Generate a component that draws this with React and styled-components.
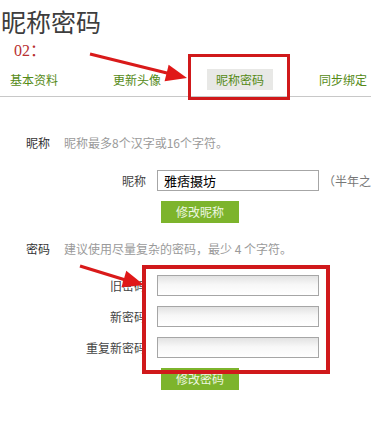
import React from "react";
import styled, { createGlobalStyle } from "styled-components";

const GlobalStyle = createGlobalStyle`
  html, body {
    margin: 0;
    padding: 0;
    background: #fff;
    overflow: hidden;
  }
  body {
    font-family: "Noto Sans CJK SC", "Liberation Sans", sans-serif;
    font-size: 12px;
    color: #333;
  }
`;

const tabs = ["基本资料", "更新头像", "昵称密码", "同步绑定"];

// annotation arrows drawn on top of the page
const arrows = [
  { from: [90, 54], to: [187, 78] },
  { from: [80, 266], to: [144, 285] },
];

function arrowHead([x1, y1], [x2, y2]) {
  const dx = x2 - x1;
  const dy = y2 - y1;
  const len = Math.hypot(dx, dy);
  const ux = dx / len;
  const uy = dy / len;
  const bx = x2 - ux * 21;
  const by = y2 - uy * 21;
  const w = 8.5;
  return `${x2},${y2} ${bx - uy * w},${by + ux * w} ${bx + uy * w},${by - ux * w}`;
}

export default function App() {
  return (
    <Page>
      <GlobalStyle />
      <Title>昵称密码</Title>
      <StepNo>02：</StepNo>
      <Tabs>
        {tabs.map((t) => (
          <Tab key={t} $active={t === "昵称密码"}>
            {t}
          </Tab>
        ))}
      </Tabs>

      <Section $top={36}>
        <SectionHead>
          <HeadLabel>昵称</HeadLabel>
          <Hint>昵称最多8个汉字或16个字符。</Hint>
        </SectionHead>
        <Form $top={17}>
          <FieldLabel>昵称</FieldLabel>
          <FieldWrap>
            <Input defaultValue="雅痞摄坊" $filled />
            <Note>（半年之内</Note>
          </FieldWrap>
          <span />
          <Button>修改昵称</Button>
        </Form>
      </Section>

      <Section $top={16}>
        <SectionHead>
          <HeadLabel>密码</HeadLabel>
          <Hint>建议使用尽量复杂的密码，最少 4 个字符。</Hint>
        </SectionHead>
        <Form $top={16}>
          <FieldLabel>旧密码</FieldLabel>
          <Input type="password" />
          <FieldLabel>新密码</FieldLabel>
          <Input type="password" />
          <FieldLabel>重复新密码</FieldLabel>
          <Input type="password" />
          <span />
          <Button>修改密码</Button>
        </Form>
      </Section>

      <Mark $x={188} $y={54} $w={102} $h={46} $b={3} />
      <Mark $x={142} $y={265} $w={188} $h={109} $b={4} />
      <Overlay width="371" height="426">
        {arrows.map((a, i) => (
          <g key={i}>
            <line
              x1={a.from[0]}
              y1={a.from[1]}
              x2={a.to[0] - 12}
              y2={a.to[1] - 3}
              stroke="#d91a1a"
              strokeWidth="3.2"
            />
            <polygon points={arrowHead(a.from, a.to)} fill="#e01818" />
          </g>
        ))}
      </Overlay>
    </Page>
  );
}

const Page = styled.div`
  position: relative;
  width: 371px;
  height: 426px;
  overflow: hidden;
`;

const Title = styled.h1`
  margin: 0;
  padding: 5px 0 0 1px;
  height: 34px;
  font-family: "Noto Sans CJK SC", sans-serif;
  font-size: 25px;
  font-weight: 400;
  line-height: 32px;
  color: #3d3d3d;
`;

const StepNo = styled.div`
  padding: 3px 0 0 14px;
  height: 27px;
  font-family: "Liberation Serif", "Noto Sans CJK SC", serif;
  font-size: 16px;
  line-height: 18px;
  color: #b8302f;
`;

const Tabs = styled.div`
  display: flex;
  gap: 37px;
  padding: 0 0 6px 1px;
  border-bottom: 1px solid #c8c8c8;
`;

const Tab = styled.div`
  height: 21px;
  padding: 0 9px;
  line-height: 21px;
  font-size: 12px;
  white-space: nowrap;
  color: #558a16;
  background: ${(p) => (p.$active ? "#e8e8e6" : "transparent")};
`;

const Section = styled.section`
  padding-top: ${(p) => p.$top}px;
`;

const SectionHead = styled.div`
  display: flex;
  padding-left: 26px;
  height: 20px;
  line-height: 20px;
`;

const HeadLabel = styled.span`
  width: 38px;
  color: #333;
  font-size: 12px;
`;

const Hint = styled.span`
  color: #9a9a9a;
  font-size: 12px;
`;

const Form = styled.div`
  display: grid;
  grid-template-columns: 146px auto;
  column-gap: 11px;
  row-gap: 10px;
  align-items: center;
  margin-top: ${(p) => p.$top}px;
`;

const FieldLabel = styled.label`
  text-align: right;
  font-size: 12px;
  color: #444;
  white-space: nowrap;
`;

const FieldWrap = styled.div`
  display: flex;
  align-items: center;
  gap: 4px;
`;

const Input = styled.input`
  box-sizing: border-box;
  width: 162px;
  height: 21px;
  margin: 0;
  padding: 0 6px;
  border: 1px solid #a6a6a6;
  border-radius: 0;
  outline: none;
  font-family: "Noto Sans CJK SC", sans-serif;
  font-size: 13px;
  font-weight: 400;
  color: #000;
  background: ${(p) =>
    p.$filled ? "#fff" : "linear-gradient(#e2e2e2 0%, #f7f7f7 45%, #fff 100%)"};
`;

const Note = styled.span`
  color: #777;
  font-size: 12px;
  white-space: nowrap;
`;

const Button = styled.button`
  justify-self: start;
  width: 78px;
  height: 22px;
  margin: 0 0 0 4px;
  padding: 0;
  border: none;
  background: #7db42c;
  color: #eef7e2;
  font-family: "Noto Sans CJK SC", sans-serif;
  font-size: 12px;
  line-height: 22px;
`;

const Mark = styled.div`
  position: absolute;
  left: ${(p) => p.$x}px;
  top: ${(p) => p.$y}px;
  width: ${(p) => p.$w}px;
  height: ${(p) => p.$h}px;
  box-sizing: border-box;
  border: ${(p) => p.$b}px solid #d0191b;
  pointer-events: none;
`;

const Overlay = styled.svg`
  position: absolute;
  left: 0;
  top: 0;
  pointer-events: none;
`;
